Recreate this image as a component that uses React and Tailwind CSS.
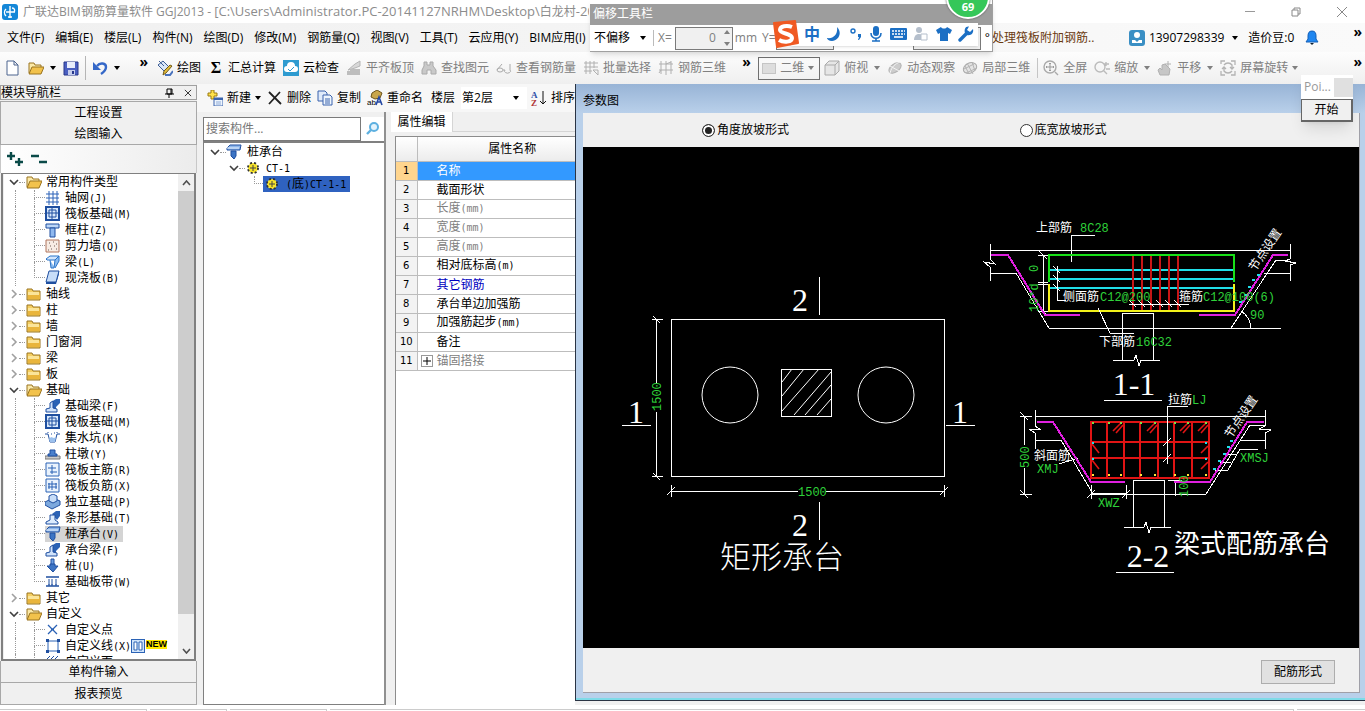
import { useState } from "react";

const ink = "#1f4fa0";

const glyphs = {
  folder: (
    <>
      <path d="M1 3h5l1 2h7v9H1z" fill="#f5cf62" stroke="#9a7420" />
      <path d="M2 7h12v6H2z" fill="#e9b53c" />
      <path d="M2 6h11v3H2z" fill="#fbe59a" />
    </>
  ),
  open: (
    <>
      <path d="M1 3h5l1 2h6v8H1z" fill="#fbe9a8" stroke="#9a7420" />
      <path d="M4 7h12l-3 7H1z" fill="#f2c24c" stroke="#9a7420" />
    </>
  ),
  axis: <path d="M1 4h13M1 8h13M1 12h13M4 1v14M8 1v14M12 1v14" stroke="#2d62b8" fill="none" />,
  raft: (
    <>
      <path d="M1 1h13v13H1z" fill="#d8e8fb" stroke={ink} strokeWidth="2" />
      <path d="M4 4h7v7H4zM7 2v12M2 7h12" fill="none" stroke={ink} />
    </>
  ),
  column: (
    <>
      <path d="M1 2h13v4H1z" fill="#bcd6f7" stroke={ink} />
      <path d="M5 6h5v9H5z" fill="#8fb8ee" stroke={ink} />
    </>
  ),
  wall: (
    <>
      <path d="M1 2h13v12H1z" fill="#f7ece4" stroke="#b0745c" />
      <path d="M4 5h1M8 4h1M5 8h1M9 8h1M11 11h1M6 11h1M11 6h1M3 12h1" stroke="#6d5a52" />
    </>
  ),
  beam: (
    <>
      <path d="M1 5l4-3h9l-3 4H2z" fill="#d3e6fc" stroke="#2b74c9" />
      <path d="M5 6l1 8h3l1-8 4-4v5l-4 7" fill="#8bbcf0" stroke="#2b74c9" />
    </>
  ),
  slab: (
    <>
      <path d="M4 1h10l-3 11H1z" fill="#c7ddf8" stroke={ink} />
      <path d="M1 12h10l3-11v3l-3 10H1z" fill={ink} />
    </>
  ),
  fbeam: (
    <>
      <path d="M6 4l5-3h4v4l-4 4v5H8V6z" fill="#2b62b5" />
      <path d="M1 14v-3l4-1V5l3-2v7l4 1v3z" fill="#cfe2fb" stroke={ink} />
    </>
  ),
  pit: (
    <>
      <path d="M0 4h3l2 8h5l2-8h3" fill="none" stroke={ink} />
      <path d="M4 9l2-2 3 1 2-1-1 5H5z" fill="#9cc1ee" />
      <path d="M3 2v1M6 4h1M9 3h1M12 2v1" stroke={ink} />
    </>
  ),
  pier: (
    <>
      <path d="M0 10h15v3H0z" fill="#c9c9c9" stroke="#777" />
      <path d="M3 10V8h2V4h5v4h2v2z" fill="#4a80cc" stroke={ink} />
    </>
  ),
  rebarA: <path d="M1 1h13v13H1zM7 3v9M3 6h8M5 10h7" fill="#eaf3fd" stroke="#2b62b5" />,
  rebarB: <path d="M1 1h13v13H1zM7 3v9M3 6h9M3 9h9M11 5v6M4 5v6" fill="#eaf3fd" stroke="#2b62b5" />,
  pad: (
    <>
      <path d="M0 8l8-4 7 3v4l-8 4-7-4z" fill="#7ca8dd" stroke={ink} />
      <path d="M4 2l4-2 4 2v5L8 9 4 7z" fill="#c7ddf8" stroke={ink} />
    </>
  ),
  strip: (
    <>
      <path d="M7 4l4-3h4v5l-3 4z" fill="#2b62b5" />
      <path d="M1 14v-2l4-2V5h5v5l3 2v2z" fill="#dcebfd" stroke={ink} />
    </>
  ),
  cap: (
    <>
      <path d="M1 4l3-3h11l-1 5H1z" fill="#8db6ea" stroke={ink} />
      <path d="M1 4h12" stroke="#e8f2fe" />
      <path d="M5 7h5v5l-2 3-3-3z" fill="#3c74c4" stroke={ink} />
    </>
  ),
  pile: (
    <>
      <path d="M6 1h3v6H6z" fill="#6b9de0" stroke={ink} />
      <path d="M2 8h3V6h5v2h3l-5 6z" fill="#3c74c4" stroke={ink} />
    </>
  ),
  band: (
    <>
      <path d="M1 3h13M1 12h13" fill="none" stroke={ink} strokeWidth="1.4" />
      <path d="M4 5v6M7 5v6M11 5v6M3 11h2M6 11h2M10 11h2" fill="none" stroke={ink} />
    </>
  ),
  point: <path d="M3 3l9 9M12 3l-9 9M6 7h3" fill="none" stroke="#2b62b5" strokeWidth="1.3" />,
  line: (
    <>
      <path d="M3 3h10v10H3z" fill="none" stroke="#2b62b5" />
      <path d="M1 1h3v3H1zM12 1h3v3h-3zM1 12h3v3H1zM12 12h3v3h-3z" fill={ink} />
    </>
  ),
  face: <path d="M1 6l4-4M5 6l4-4M9 6l4-4" stroke={ink} />,
  gear: (
    <>
      <circle cx="8" cy="8" r="5" fill="#ffee33" stroke="#333" strokeWidth="2" strokeDasharray="2 2" />
      <circle cx="8" cy="8" r="4" fill="#f7e32a" />
      <path d="M8 5v6M5 8h6" stroke="#444" />
    </>
  ),
  file: <path d="M2 1h7l4 4v10H2zM9 1v4h4" fill="#fff" stroke="#4d648f" />,
  save: (
    <>
      <path d="M1 2h14v13H1z" fill="#4a5fc0" stroke="#27378a" />
      <path d="M4 2h8v6H4z" fill="#e8edfb" />
      <path d="M5 10h7v5H5z" fill="#c5cdec" />
      <path d="M9 11h2v3H9z" fill="#27378a" />
    </>
  ),
  undo: (
    <>
      <path d="M5 6c3-4 9-3 9 1 0 3-2 5-5 7" fill="none" stroke="#3568c8" strokeWidth="2.4" />
      <path d="M1 2v8h8z" fill="#3568c8" />
    </>
  ),
  paint: (
    <>
      <path d="M1 5l5-4 6 6-5 4z" fill="#dbe7f7" stroke="#3b5c94" />
      <path d="M2 1l5 5" stroke="#3b5c94" />
      <path d="M15 6l-6 7-3 2 1-4 6-6z" fill="#e2bb3a" stroke="#715b1b" />
      <path d="M8 15h5l3-4" stroke="#4972bd" strokeWidth="2" fill="none" />
    </>
  ),
  cloud: (
    <>
      <path d="M0 0h16v16H0z" fill="#2e9bd0" />
      <path d="M4 12a3 3 0 010-6 4 4 0 018 0 3 3 0 010 6z" fill="#fff" />
      <path d="M5 9l2 2 4-4" fill="none" stroke="#2e9bd0" />
    </>
  ),
  level: (
    <>
      <path d="M2 10l7-6 5-3v5l-5 2z" fill="#d8d8d8" stroke="#b5b5b5" />
      <path d="M1 15v-4h3v-2h10v6z" fill="#bdbdbd" />
    </>
  ),
  find: <path d="M3 2h3v3h3V2h3v4l3 4v4h-5v-4H6v4H1v-4l2-4z" fill="#c9c9c9" stroke="#aaa" />,
  glasses: <path d="M1 10a3 2 0 106 0 3 2 0 00-6 0zM9 10a3 2 0 105 0V4M1 10l5-6M7 10h2" fill="none" stroke="#aaa" />,
  batch: <path d="M1 3h14M1 7h14M1 11h8M3 1v13M7 1v13M11 1v7M10 10h5v5z" fill="none" stroke="#b0b0b0" />,
  grid3: <path d="M1 4h14M1 10h14M3 1v13M8 1v14M13 1v13M8 4l5-2M3 10l-2 3" fill="none" stroke="#b0b0b0" />,
  cube: <path d="M1 5l4-4h10v10l-4 4H1zM1 5h10v10M11 5l4-4" fill="#e6e6e6" stroke="#aaa" />,
  orbit: (
    <>
      <ellipse cx="8" cy="8" rx="7" ry="4" transform="rotate(-35 8 8)" fill="#ccc" stroke="#b2b2b2" />
      <path d="M3 13c2-7 5-9 10-11M3 6l9 5" stroke="#f4f4f4" fill="none" />
    </>
  ),
  local: (
    <>
      <ellipse cx="8" cy="8" rx="7" ry="5" transform="rotate(-25 8 8)" fill="#e4e4e4" stroke="#aaa" />
      <path d="M5 3l6 11M10 2l3 9M2 9l10-5M4 13l11-5M3 6l4 8" fill="none" stroke="#b5b5b5" />
    </>
  ),
  full: (
    <>
      <path d="M7 1a6 6 0 100 12A6 6 0 007 1zM12 12l3 3" fill="none" stroke="#aaa" strokeWidth="1.4" />
      <path d="M7 3v8M3 7h8M6 4l1-1 1 1M6 10l1 1 1-1M4 6L3 7l1 1M10 6l1 1-1 1" fill="none" stroke="#999" />
    </>
  ),
  zoom: <path d="M6 2a5 5 0 100 10A5 5 0 006 2zM9 10l4 4M12 2v4M10 4h5M12 9h4" fill="none" stroke="#bbb" strokeWidth="1.4" />,
  pan: (
    <>
      <path d="M3 15l-2-5 2-2 2 2V5l3-1 5 5-1 6z" fill="#c6c6c6" stroke="#b0b0b0" />
      <path d="M11 1v6M8 4h6" stroke="#b0b0b0" />
    </>
  ),
  rotate: <path d="M1 4V1h4M11 1h4v4M15 11v4h-4M5 15H1v-4M4 5a5 5 0 018 0v3M12 11a5 5 0 01-8 0V8M10 7l2 2 2-2M2 9l2-2 2 2" fill="none" stroke="#b3b3b3" strokeWidth="1.3" />,
  add: (
    <>
      <path d="M4 0h3v3h3v3H7v3H4V6H1V3h3z" fill="#ffe14a" stroke="#9a7a10" />
      <path d="M7 8h9v8H7z" fill="#eef5fd" stroke="#3a63ad" />
      <path d="M7 9h9" stroke="#3a63ad" strokeWidth="2" />
      <path d="M9 12h5M9 14h5" stroke="#8fabd8" />
    </>
  ),
  del: <path d="M2 2l12 12M13 2L2 14" stroke="#222" strokeWidth="1.8" fill="none" />,
  copy: (
    <>
      <path d="M1 1h7l2 2v8H1z" fill="#dfeafa" stroke="#3a63ad" />
      <path d="M6 5h7l2 2v8H6zM8 9h5M8 11h5M8 13h5" fill="#eef5fd" stroke="#3a63ad" />
    </>
  ),
  rename: (
    <>
      <path d="M5 3l5-3 5 3-2 5-5 1-4-2z" fill="#c9a64b" stroke="#6b521a" />
      <text x="0" y="15" fontSize="8" fontFamily="Liberation Sans">ab</text>
      <path d="M9 15l3-8 3 8M10 12h4" stroke="#2447a3" strokeWidth="1.6" fill="none" />
    </>
  ),
  sort: (
    <>
      <text x="0" y="8" fontSize="9" fontWeight="bold" fill="#2c4fa8" fontFamily="Liberation Serif">A</text>
      <text x="0" y="16" fontSize="9" fontWeight="bold" fill="#b03535" fontFamily="Liberation Serif">Z</text>
      <path d="M12 1v13M9 11l3 3 3-3" stroke="#111" fill="none" />
    </>
  ),
};

function Icon({ name, className = "" }) {
  return (
    <svg viewBox="0 0 16 16" className={`w-4 h-4 shrink-0 ${className}`} aria-hidden="true">
      {glyphs[name]}
    </svg>
  );
}

function Caret({ className = "" }) {
  return (
    <svg viewBox="0 0 6 4" className={`w-[6px] h-1 shrink-0 ${className}`} aria-hidden="true">
      <path d="M0 0h6L3 4z" fill="currentColor" />
    </svg>
  );
}

function Chevron({ open }) {
  return (
    <svg viewBox="0 0 10 10" className="w-[10px] h-[10px] shrink-0" aria-hidden="true">
      <path d={open ? "M1 3l4 4 4-4" : "M3 1l4 4-4 4"} fill="none" stroke={open ? "#404040" : "#a0a0a0"} strokeWidth="1.6" />
    </svg>
  );
}

const menus = ["文件(F)", "编辑(E)", "楼层(L)", "构件(N)", "绘图(D)", "修改(M)", "钢筋量(Q)", "视图(V)", "工具(T)", "云应用(Y)", "BIM应用(I)"];

const tools = [
  { icon: "paint", label: "绘图" },
  { icon: "sum", label: "汇总计算" },
  { icon: "cloud", label: "云检查" },
  { icon: "level", label: "平齐板顶", off: true },
  { icon: "find", label: "查找图元", off: true },
  { icon: "glasses", label: "查看钢筋量", off: true },
  { icon: "batch", label: "批量选择", off: true },
  { icon: "grid3", label: "钢筋三维", off: true },
];

const tree = [
  { label: "常用构件类型", open: true },
  { label: "轴网", key: "(J)", icon: "axis" },
  { label: "筏板基础", key: "(M)", icon: "raft" },
  { label: "框柱", key: "(Z)", icon: "column" },
  { label: "剪力墙", key: "(Q)", icon: "wall" },
  { label: "梁", key: "(L)", icon: "beam" },
  { label: "现浇板", key: "(B)", icon: "slab", last: true },
  { label: "轴线" },
  { label: "柱" },
  { label: "墙" },
  { label: "门窗洞" },
  { label: "梁" },
  { label: "板" },
  { label: "基础", open: true },
  { label: "基础梁", key: "(F)", icon: "fbeam" },
  { label: "筏板基础", key: "(M)", icon: "raft" },
  { label: "集水坑", key: "(K)", icon: "pit" },
  { label: "柱墩", key: "(Y)", icon: "pier" },
  { label: "筏板主筋", key: "(R)", icon: "rebarA" },
  { label: "筏板负筋", key: "(X)", icon: "rebarB" },
  { label: "独立基础", key: "(P)", icon: "pad" },
  { label: "条形基础", key: "(T)", icon: "strip" },
  { label: "桩承台", key: "(V)", icon: "cap", active: true },
  { label: "承台梁", key: "(F)", icon: "fbeam" },
  { label: "桩", key: "(U)", icon: "pile" },
  { label: "基础板带", key: "(W)", icon: "band", last: true },
  { label: "其它" },
  { label: "自定义", open: true },
  { label: "自定义点", icon: "point" },
  { label: "自定义线", key: "(X)", icon: "line", isNew: true },
  { label: "自定义面", icon: "face" },
];

const props = [
  { name: "名称" },
  { name: "截面形状" },
  { name: "长度", unit: "(mm)", tone: "text-[#808080]" },
  { name: "宽度", unit: "(mm)", tone: "text-[#808080]" },
  { name: "高度", unit: "(mm)", tone: "text-[#808080]" },
  { name: "相对底标高", unit: "(m)" },
  { name: "其它钢筋", tone: "text-[#0000c0]" },
  { name: "承台单边加强筋" },
  { name: "加强筋起步", unit: "(mm)" },
  { name: "备注" },
  { name: "锚固搭接", tone: "text-[#808080]", more: true },
];

function Mono({ children }) {
  return <span className="font-['DejaVu_Sans_Mono',monospace] text-[10px]">{children}</span>;
}

function ToolButton({ icon, label, off, caret, tight }) {
  return (
    <button className={`flex items-center gap-1 shrink-0 ${off ? "text-[#808080]" : "text-black"}`}>
      {icon === "sum" ? <span className="w-4 text-center text-base font-bold leading-4 font-['Liberation_Serif',serif]">Σ</span> : <Icon name={icon} />}
      <span>{label}</span>
      {caret && <Caret className={tight ? "" : "ml-[2px]"} />}
    </button>
  );
}

function TitleBar() {
  return (
    <header className="flex items-center h-[23px] shrink-0 bg-white text-[#8c8c8c] pl-[2px]">
      <svg viewBox="0 0 16 16" className="w-4 h-4 shrink-0" aria-hidden="true">
        <rect width="16" height="16" rx="3" fill="#1487d8" />
        <path d="M8 2v12M4 8h9M4 5c-2 2-2 5 0 7M10 4c3 0 3 3 2 4M6 13h4" fill="none" stroke="#fff" strokeWidth="1.4" />
      </svg>
      <h1 className="ml-[5px] w-[566px] overflow-hidden whitespace-nowrap">
        广联达BIM钢筋算量软件 GGJ2013 - <span className="text-[13px]">[C:\Users\Administrator.PC-20141127NRHM\Desktop\</span>白龙村<span className="text-[13px]">-20</span>
      </h1>
      <div className="flex items-center gap-9 ml-auto mr-[18px]">
        <button aria-label="最小化" className="w-[10px] h-px bg-[#999]" />
        <button aria-label="还原">
          <svg viewBox="0 0 10 10" className="w-[10px] h-[10px]"><path d="M1 3h6v6H1zM3 3V1h6v6H7" fill="none" stroke="#888" /></svg>
        </button>
        <button aria-label="关闭">
          <svg viewBox="0 0 10 10" className="w-[10px] h-[10px]"><path d="M0 0l10 10M10 0L0 10" fill="none" stroke="#888" /></svg>
        </button>
      </div>
    </header>
  );
}

function MenuBar() {
  return (
    <nav className="flex items-center h-[29px] shrink-0 pl-[7px] bg-linear-to-r from-[#f0f0f0] to-[#fafafa]">
      <div className="flex gap-[11px] w-[585px] overflow-hidden whitespace-nowrap">
        {menus.map((m) => (
          <button key={m} className="shrink-0">{m}</button>
        ))}
      </div>
      <a href="#tip" className="ml-[400px] text-[#6b3a10] whitespace-nowrap">处理筏板附加钢筋..</a>
      <div className="flex items-center gap-[6px] ml-auto mr-[3px] whitespace-nowrap">
        <svg viewBox="0 0 16 16" className="w-4 h-4" aria-hidden="true">
          <rect width="16" height="16" rx="3" fill="#3a8fc4" />
          <circle cx="8" cy="5" r="3" fill="#fff" />
          <path d="M3 10h3l2 2 2-2h3v3H3z" fill="#fff" />
        </svg>
        <button className="flex items-center gap-2 -ml-[2px]">13907298339 <Caret /></button>
        <span className="ml-1">造价豆:0</span>
        <svg viewBox="0 0 14 16" className="w-[14px] h-4 ml-[5px]" aria-label="消息">
          <path d="M7 1c3 0 4 2 4 5v3l2 3H1l2-3V6c0-3 1-5 4-5z" fill="#1f86f0" stroke="#1560b8" />
          <path d="M5 13l2 2 2-2z" fill="#123" />
        </svg>
        <button className="ml-7 mb-3 text-sm font-bold leading-3">»</button>
      </div>
    </nav>
  );
}

function MainToolbar() {
  return (
    <div className="flex items-center h-8 shrink-0 pl-[5px] whitespace-nowrap bg-linear-to-b from-[#fdfdfd] to-[#efefef]">
      <div className="flex items-center w-[152px] shrink-0">
        <button aria-label="新建"><Icon name="file" /></button>
        <button aria-label="打开" className="flex items-center gap-[6px] ml-[7px]"><Icon name="open" /><Caret /></button>
        <button aria-label="保存" className="ml-[7px]"><Icon name="save" /></button>
        <span className="w-px h-6 ml-[6px] bg-[#b5b5b5]" />
        <button aria-label="撤销" className="flex items-center gap-[6px] ml-[6px]"><Icon name="undo" /><Caret /></button>
        <button className="ml-auto mr-[9px] mb-3 text-sm font-bold leading-3">»</button>
      </div>
      <div className="flex items-center gap-[7px]">
        {tools.map((t) => (
          <ToolButton key={t.label} {...t} />
        ))}
      </div>
      <button className="ml-4 mb-3 w-[9px] text-sm font-bold leading-3">»</button>
      <button className="flex items-center gap-1 w-[62px] h-[23px] px-[3px] ml-[7px] shrink-0 border border-[#707070] text-[#808080]">
        <span className="w-[14px] h-[11px] bg-[#ddd] border border-[#c5c5c5]" />
        <span>二维</span>
        <Caret />
      </button>
      <div className="flex items-center gap-[7px] ml-1">
        <ToolButton icon="cube" label="俯视" off caret />
        <ToolButton icon="orbit" label="动态观察" off />
        <ToolButton icon="local" label="局部三维" off />
        <span className="w-px h-5 bg-[#c5c5c5] -mr-[2px]" />
        <ToolButton icon="full" label="全屏" off />
        <ToolButton icon="zoom" label="缩放" off caret />
        <ToolButton icon="pan" label="平移" off caret />
        <ToolButton icon="rotate" label="屏幕旋转" off caret tight />
      </div>
      <button className="ml-auto mr-[3px] mb-3 text-sm font-bold leading-3">»</button>
    </div>
  );
}

function TreeRow({ item }) {
  if (!item.icon) {
    return (
      <li className="flex items-center h-4 pl-[3px]">
        <Chevron open={item.open} />
        <span className="w-[6px] border-t border-dotted border-[#999]" />
        <Icon name={item.open ? "open" : "folder"} className="mx-[1px]" />
        <span className="ml-[3px]">{item.label}</span>
      </li>
    );
  }
  return (
    <li className="flex items-center h-4 pl-[9px]">
      <span className="w-[19px] h-4 shrink-0 border-l border-dotted border-[#999]" />
      <span className="flex flex-col w-[11px] h-4 shrink-0">
        <span className="h-2 border-l border-b border-dotted border-[#999]" />
        {!item.last && <span className="h-2 border-l border-dotted border-[#999]" />}
      </span>
      <span className={`flex items-center h-4 pr-1 ${item.active ? "bg-[#d4d4d4]" : ""}`}>
        <Icon name={item.icon} />
        <span className="ml-1">{item.label}{item.key && <Mono>{item.key}</Mono>}</span>
      </span>
      {item.isNew && (
        <>
          <svg viewBox="0 0 14 14" className="w-[14px] h-[14px] -ml-1 shrink-0" aria-hidden="true">
            <path d="M0 0h14v14H0z" fill="#cfe3fa" stroke="#2b62b5" strokeWidth="2" />
            <path d="M3 3h3v8H3zM8 3h3v8H8z" fill="#fff" stroke="#2b62b5" />
          </svg>
          <span className="ml-[1px] mb-1 h-[9px] bg-[#ffea00] text-[9px] leading-[9px] font-bold font-['Liberation_Sans',sans-serif]">NEW</span>
        </>
      )}
    </li>
  );
}

function NavButton({ children }) {
  return <button className="h-[22px] shrink-0 border border-t-0 border-[#a8a8a8] bg-[#f0f0f0] text-center">{children}</button>;
}

function ModulePanel() {
  return (
    <aside className="flex flex-col w-[197px] shrink-0 pt-px">
      <div className="flex items-center h-[15px] shrink-0 border border-[#a0a0a0] pr-1">
        <h2>模块导航栏</h2>
        <button aria-label="固定" className="ml-auto">
          <svg viewBox="0 0 9 10" className="w-[9px] h-[10px]"><path d="M2 1h5v5H2zM0 6h9M4 6v4M6 1v5" fill="none" stroke="#000" /></svg>
        </button>
        <button aria-label="关闭" className="ml-[10px]">
          <svg viewBox="0 0 9 9" className="w-2 h-2"><path d="M1 1l7 7M8 1L1 8" stroke="#222" /></svg>
        </button>
      </div>
      <div className="h-[22px] shrink-0 mt-px flex flex-col border-t border-[#a8a8a8]"><NavButton>工程设置</NavButton></div>
      <NavButton>绘图输入</NavButton>
      <div className="flex items-center gap-2 h-7 shrink-0 pl-[6px] border-x border-[#c8c8c8] bg-linear-to-r from-white to-[#ececec]">
        <button aria-label="展开">
          <svg viewBox="0 0 16 16" className="w-4 h-4"><path d="M4 1v8M0 5h8M12 7v8M8 11h8" stroke="#0a4a48" strokeWidth="2.4" /></svg>
        </button>
        <button aria-label="折叠">
          <svg viewBox="0 0 16 16" className="w-4 h-4"><path d="M0 5h8M8 11h8" stroke="#0a4a48" strokeWidth="2.4" /></svg>
        </button>
      </div>
      <div className="flex flex-1 min-h-0 mx-[1px] border-2 border-t border-[#808080] bg-white">
        <ul className="flex-1 min-w-0 pl-[2px] overflow-hidden whitespace-nowrap border-l border-[#eee]">
          {tree.map((item, i) => (
            <TreeRow key={i} item={item} />
          ))}
        </ul>
        <div className="flex flex-col w-4 shrink-0 bg-[#f0f0f0]">
          <button aria-label="向上滚动" className="h-[17px] flex items-center justify-center">
            <svg viewBox="0 0 9 6" className="w-[9px] h-[6px]"><path d="M1 5l3.500-4L8 5" fill="none" stroke="#505050" strokeWidth="1.6" /></svg>
          </button>
          <div className="flex-1 bg-[#cdcdcd]" />
          <div className="h-7" />
          <button aria-label="向下滚动" className="h-[17px] flex items-center justify-center">
            <svg viewBox="0 0 9 6" className="w-[9px] h-[6px]"><path d="M1 1l3.500 4L8 1" fill="none" stroke="#505050" strokeWidth="1.6" /></svg>
          </button>
        </div>
      </div>
      <NavButton>单构件输入</NavButton>
      <NavButton>报表预览</NavButton>
    </aside>
  );
}

function ComponentPanel() {
  return (
    <section className="flex flex-col w-[378px] shrink-0 overflow-hidden whitespace-nowrap">
      <div className="flex items-center h-7 shrink-0 pl-[10px] gap-[6px] bg-[#f7f7f7]">
        <ToolButton icon="add" label="新建" caret tight />
        <ToolButton icon="del" label="删除" />
        <ToolButton icon="copy" label="复制" />
        <ToolButton icon="rename" label="重命名" />
        <span className="w-px h-4 bg-[#d3b9b0]" />
        <label htmlFor="floor" className="-ml-[4px]">楼层</label>
        <div className="flex items-center shrink-0 w-[66px] h-[22px] pr-2 bg-white">
          <select id="floor" className="appearance-none flex-1 min-w-0 pl-[1px] bg-white outline-none">
            <option>第2层</option>
          </select>
          <Caret />
        </div>
        <span className="w-px h-4 -ml-[6px] bg-[#d3b9b0]" />
        <div className="-ml-[2px]"><ToolButton icon="sort" label="排序" /></div>
      </div>
      <div className="flex flex-1 min-h-0">
        <div className="flex flex-col w-[183px] ml-[6px] shrink-0 pt-1 border-r-2 border-[#909090]">
          <div className="flex items-center h-[25px] shrink-0">
            <input aria-label="搜索构件" placeholder="搜索构件..." className="w-[158px] h-6 border border-[#7a7a7a] bg-white px-[2px] outline-none placeholder:text-[#777]" />
            <button aria-label="搜索" className="flex flex-1 justify-center items-center h-6 bg-white">
              <svg viewBox="0 0 14 14" className="w-[14px] h-[14px]"><circle cx="8" cy="5" r="4" fill="#e4f3fc" stroke="#5db0e0" strokeWidth="2" /><path d="M5 8l-4 4" stroke="#5db0e0" strokeWidth="2.4" /></svg>
            </button>
          </div>
          <ul className="flex-1 border border-r-0 border-t-2 border-[#808080] bg-white pt-px">
            <li className="flex items-center h-4 pl-[6px]">
              <Chevron open />
              <span className="w-[6px] border-t border-dotted border-[#999]" />
              <Icon name="cap" />
              <span className="ml-[5px]">桩承台</span>
            </li>
            <li className="flex items-center h-4 pl-[25px]">
              <Chevron open />
              <span className="w-[6px] border-t border-dotted border-[#999]" />
              <Icon name="gear" />
              <span className="ml-[5px]"><Mono>CT-1</Mono></span>
            </li>
            <li className="flex items-center h-4 pl-[50px]">
              <span className="w-[9px] h-2 mb-2 border-l border-b border-dotted border-[#999]" />
              <span className="flex items-center h-4 pl-[1px] pr-1 bg-[#2f62c0]">
                <Icon name="gear" />
                <span className="ml-[6px]"><Mono>(</Mono>底<Mono>)CT-1-1</Mono></span>
              </span>
            </li>
          </ul>
        </div>
        <div className="flex flex-col flex-1 min-w-0 ml-[5px]">
          <div className="flex h-5 shrink-0">
            <button className="w-[62px] bg-white border-r border-[#d5d5d5]">属性编辑</button>
            <span className="flex-1 border-b border-[#d5d5d5]" />
          </div>
          <div className="flex-1 mt-1 ml-1 border-l border-t border-[#8c8c8c] bg-white">
            <table className="w-full border-collapse table-fixed">
              <thead>
                <tr className="h-6 bg-linear-to-b from-white to-[#ececec]">
                  <th className="w-[21px] border-r border-b border-[#bdbdbd]" />
                  <th className="pl-8 font-normal border-b border-[#bdbdbd]">属性名称</th>
                </tr>
              </thead>
              <tbody>
                {props.map((p, i) => (
                  <tr key={p.name} className="h-[19px]">
                    <td className={`border-r border-b border-[#bdbdbd] p-0 text-center ${i === 0 ? "bg-[#ffd58e]" : "bg-[#f3f3f3]"}`}>
                      <span className="font-['DejaVu_Sans',sans-serif] text-[10px]">{i + 1}</span>
                    </td>
                    <td className={`border-b border-[#bdbdbd] p-0 ${i === 0 ? "bg-[#3399ff] text-white" : p.tone || ""}`}>
                      <div className="flex items-center">
                        <span className="flex justify-center w-[19px] shrink-0">
                          {p.more && (
                            <button aria-label="展开" className="w-3 h-3 border border-[#999] text-black">
                              <svg viewBox="0 0 10 10" className="w-[10px] h-[10px]"><path d="M5 1v8M1 5h8" stroke="#000" /></svg>
                            </button>
                          )}
                        </span>
                        <span>{p.name}{p.unit && <Mono>{p.unit}</Mono>}</span>
                      </div>
                    </td>
                  </tr>
                ))}
              </tbody>
            </table>
          </div>
        </div>
      </div>
    </section>
  );
}

const green = "#2fd23a";
const magenta = "#e01fe0";
const red = "#e01414";
const cyan = "#20dfe8";

// one drawing unit is one pixel of the dialog canvas
function Drawing() {
  const stirrups = [1133, 1142, 1151, 1160, 1169, 1178];
  const bars = [1093, 1109, 1121, 1141, 1155, 1175, 1188, 1206];
  return (
    <svg viewBox="583 147 776 501" className="w-full h-full" role="img" aria-label="参数图">
      <g fill="none" stroke="#fff" shapeRendering="crispEdges">
        <path d="M671 319H944V476H671zM781 369H831V416H781z" />
        <path d="M819 277V315M819 502V540M622 425H651M946 425H975" />
        <path d="M656 319V383M656 412V476M652 319H663M652 476H663M653 316L660 323M653 473L660 480" />
        <path d="M671 491H798M826 491H944M671 485V497M944 485V497M667 495L675 487M940 495L948 487" />
        <path d="M1104 400H1162M1116 572H1174" />

        <path d="M1071 262V235H1095M990 250H1290" />
        <path d="M990 244V259L995 264L984 262L990 267V281M1290 244V259L1285 261L1296 263L1290 265V281" />
        <path d="M990 273H1016L1049 328H1281M1231 328L1276 260H1285M1264 273H1290" />
        <path d="M1043 255V311M1038 255H1048M1038 282H1048M1038 284H1048M1038 311H1048M1039 251L1047 259M1039 307L1047 315" />
        <path d="M1122 360V313H1153V360M1113 360H1134L1136 355L1139 366L1141 360H1160" />
        <path d="M1241 311A22 22 0 0 1 1251 328" />

        <path d="M1035 416H1265M1035 410V426L1041 430L1029 429L1035 433V449M1265 410V426L1259 429L1271 430L1265 433V449" />
        <path d="M1024 416V445M1024 468V494M1020 416H1032M1020 494H1032M1020 412L1028 420M1020 490L1028 498" />
        <path d="M1035 440H1061L1093 494H1206L1250 425H1265M1241 440H1265" />
        <path d="M1225 454H1237M1220 462H1231M1215 470H1228L1240 449H1258" />
        <path d="M1059 464L1078 458M1091 485V499M1126 485V499M1087 498L1095 490M1122 498L1130 490" />
        <path d="M1175 480V496M1168 480H1182" />
        <path d="M1133 527V480H1164V527M1124 527H1144L1146 522L1149 533L1151 527H1171" />
      </g>
      <path d="M1091 494H1126" stroke="#fff" strokeWidth="2" shapeRendering="crispEdges" />
      <g fill="none" stroke="#fff">
        <circle cx="730" cy="395" r="28" />
        <circle cx="886" cy="395" r="28" />
        <path d="M782 382L792 369M782 396L804 369M782 411L819 369M794 415L831 372M805 415L831 385M817 415L831 399" />
      </g>

      <g fill="none" strokeWidth="2" shapeRendering="crispEdges">
        <path d="M991 255H1008L1045 315H1080M1199 315H1235L1273 255H1288" stroke={magenta} />
        <path d="M1037 422H1053L1091 482H1125M1174 482H1210L1247 422H1264" stroke={magenta} />
        <path d="M1049 270H1234M1049 279H1234M1049 288H1234" stroke={cyan} />
        {stirrups.map((x) => (
          <path key={x} d={`M${x} 256V311`} stroke="#c81616" />
        ))}
        <path d="M1049 282V255H1234V282" stroke="#18e018" />
        <path d="M1049 284V311H1234V284" stroke="#f2f21a" />
        <path d="M1091 422H1209V478H1091zM1107 422V478M1124 422V478M1140 422V478M1158 422V478M1174 422V478M1192 422V478M1091 442H1209M1091 458H1209" stroke={red} />
      </g>
      <g fill="none" stroke={red} strokeWidth="1.6">
        {[1113, 1147, 1180, 1198].map((x) => (
          <path key={x} d={`M${x} 431L${x + 8} 423M${x + 3} 433L${x + 10} 425`} />
        ))}
        <path d="M1092 444L1099 453M1092 460L1099 469M1201 453L1208 446M1201 469L1208 462" />
      </g>
      {bars.map((x) => (
        <g key={x}>
          <rect x={x - 1} y="422" width="2" height="2" fill="#7be04a" />
          <rect x={x - 1} y="474" width="2" height="2" fill="#ffe23a" />
        </g>
      ))}
      <path d="M1092 443h2M1092 459h2M1205 443h2M1205 459h2M1257 275h3M1252 280h3M1248 287h3M1244 295h3M1239 302h3M1230 441h3M1227 447h3M1223 454h3M1218 461h3M1213 469h3" stroke={cyan} strokeWidth="2" />

      <g fill="none" stroke="#fff" shapeRendering="crispEdges">
        <path d="M1057 266V300H1066M1053 266L1060 273M1053 275L1060 282M1053 284L1060 291" />
        <path d="M1129 304H1189M1098 308L1110 333H1134" />
        {stirrups.map((x) => (
          <path key={x} d={`M${x - 4} 300L${x + 3} 307`} />
        ))}
        <path d="M1167 464V406H1188M1163 446L1171 438M1163 462L1171 454" />
      </g>

      <g fill="#fff" className="font-['Noto_Sans_CJK_SC',sans-serif]" fontSize="12">
        <text x="1036" y="232">上部筋</text>
        <text x="1063" y="301">侧面筋</text>
        <text x="1179" y="301">箍筋</text>
        <text x="1099" y="346">下部筋</text>
        <text x="1168" y="404">拉筋</text>
        <text x="1034" y="460">斜面筋</text>
        <text transform="translate(1255 272) rotate(-56)">节点设置</text>
        <text transform="translate(1231 439) rotate(-56)">节点设置</text>
        <text x="720" y="568" fontSize="31" fontWeight="300">矩形承台</text>
        <text x="1174" y="553" fontSize="26">梁式配筋承台</text>
      </g>
      <g fill={green} className="font-['Liberation_Mono',monospace]" fontSize="12">
        <text x="1080" y="232">8C28</text>
        <text x="1100" y="301">C12@200</text>
        <text x="1203" y="301">C12@100(6)</text>
        <text x="1250" y="319">90</text>
        <text x="1136" y="346">16C32</text>
        <text x="1192" y="404">LJ</text>
        <text x="1037" y="473">XMJ</text>
        <text x="1098" y="507">XWZ</text>
        <text x="1240" y="462">XMSJ</text>
        <text x="798" y="496">1500</text>
        <text transform="translate(661 411) rotate(-90)">1500</text>
        <text transform="translate(1038 272) rotate(-90)">0</text>
        <text transform="translate(1038 312) rotate(-90)">10*d</text>
        <text transform="translate(1029 468) rotate(-90)">500</text>
        <text transform="translate(1188 497) rotate(-90)">100</text>
      </g>
      <g fill="#fff" className="font-['Liberation_Serif',serif]" fontSize="32">
        <text x="792" y="311">2</text>
        <text x="792" y="536">2</text>
        <text x="628" y="423">1</text>
        <text x="952" y="423">1</text>
        <text x="1134" y="395" textAnchor="middle">1-1</text>
        <text x="1148" y="567" textAnchor="middle">2-2</text>
      </g>
    </svg>
  );
}

function ParamDialog() {
  const [slope, setSlope] = useState("angle");
  const dot = "appearance-none w-[13px] h-[13px] rounded-full border border-[#333] bg-white checked:bg-[#222] checked:shadow-[inset_0_0_0_2px_#fff]";
  return (
    <section className="flex flex-col flex-1 min-w-0 mb-1 border-l border-b border-[#2a3444] bg-[#b9d0ea]">
      <h2 className="flex items-center h-[29px] shrink-0 pl-[7px] pt-1 bg-linear-to-b from-[#98b4d6] to-[#b9d0ea]">参数图</h2>
      <div className="flex flex-col flex-1 min-h-0 ml-[7px] mr-[5px] bg-[#f0f0f0] border-r border-b border-[#a0a0a8]">
        <div className="grid grid-cols-[318fr_340fr] h-[34px] shrink-0 items-center pl-[119px]">
          <label className="flex items-center gap-[2px]">
            <input type="radio" name="slope" className={dot} checked={slope === "angle"} onChange={() => setSlope("angle")} />
            角度放坡形式
          </label>
          <label className="flex items-center gap-[2px]">
            <input type="radio" name="slope" className={dot} checked={slope === "width"} onChange={() => setSlope("width")} />
            底宽放坡形式
          </label>
        </div>
        <div className="flex-1 min-h-0 bg-black">
          <Drawing />
        </div>
        <div className="flex items-center justify-end h-11 shrink-0 pr-6 pt-1">
          <button className="w-[74px] h-6 border border-[#adadad] bg-[#e1e1e1]">配筋形式</button>
        </div>
      </div>
      <div className="h-[7px] shrink-0 border-b-2 border-[#7fdbe8]" />
    </section>
  );
}

function OffsetWindow() {
  return (
    <div className="absolute left-[590px] top-0 w-[403px] h-[52px] pt-1 bg-white border-r border-b border-[#a0a0a0] shadow-md text-[#808080] whitespace-nowrap">
      <div className="h-[21px] px-[3px] bg-[#9d9d9d] text-white leading-[20px]">偏移工具栏</div>
      <div className="flex items-center h-[26px] pl-1">
        <label className="sr-only" htmlFor="offset">偏移</label>
        <select id="offset" className="appearance-none w-[46px] text-black outline-none">
          <option>不偏移</option>
        </select>
        <Caret className="text-black" />
        <span className="w-px h-4 ml-[7px] mr-1 bg-[#bbb]" />
        <label htmlFor="dx">X=</label>
        <span className="flex items-center w-[58px] h-[23px] ml-[3px] border border-[#7a7a7a] bg-[#f0f0f0]">
          <input id="dx" defaultValue="0" className="w-[40px] text-right bg-transparent outline-none" />
          <span className="flex flex-col gap-2 ml-2">
            <Caret className="rotate-180" />
            <Caret />
          </span>
        </span>
        <span className="ml-[2px]">mm</span>
        <label htmlFor="dy" className="ml-[5px]">Y=</label>
        <input id="dy" className="w-[58px] h-[23px] border border-[#7a7a7a] bg-[#f0f0f0]" />
        <input aria-label="角度" className="w-[68px] h-[23px] ml-auto border border-[#7a7a7a] bg-[#f0f0f0]" />
        <span className="ml-1 mr-[2px] text-black">°</span>
      </div>
    </div>
  );
}

function ImeBar() {
  return (
    <div className="absolute left-[771px] top-[20px] flex items-center h-[28px]">
      <svg viewBox="0 0 28 28" className="w-7 h-7 z-10" aria-hidden="true">
        <path d="M3 3L24 1L27 23L6 27z" fill="#f05a23" stroke="#f05a23" strokeWidth="2" strokeLinejoin="round" />
        <path d="M21 7C16 5 9 6 9 10c0 4 12 3 12 8 0 4-8 5-13 2" fill="none" stroke="#fff" strokeWidth="4" />
      </svg>
      <div className="flex items-center justify-between w-[187px] h-[23px] -ml-2 pl-[13px] pr-1 bg-white text-[#1b6fc4] shadow">
        <span className="text-base font-bold leading-4">中</span>
        <svg viewBox="0 0 16 16" className="w-4 h-4"><path d="M11 1c6 6 1 14-5 14-3 0-5-2-5-3 7 1 11-4 10-11z" fill="currentColor" /></svg>
        <svg viewBox="0 0 14 16" className="w-[14px] h-4"><circle cx="4" cy="5" r="2" fill="none" stroke="currentColor" strokeWidth="1.4" /><path d="M9 8h3v3l-2 3H9l1-3H9z" fill="currentColor" /></svg>
        <svg viewBox="0 0 14 16" className="w-[14px] h-4"><rect x="4" y="0" width="6" height="10" rx="3" fill="currentColor" /><path d="M2 7c0 7 10 7 10 0M7 12v3M3 15h8" fill="none" stroke="currentColor" strokeWidth="1.6" /></svg>
        <svg viewBox="0 0 17 14" className="w-[17px] h-[14px]"><rect y="1" width="17" height="12" rx="1" fill="currentColor" /><path d="M2 4h13M2 7h13" stroke="#fff" strokeWidth="1.6" strokeDasharray="2 1" /><path d="M4 10h9" stroke="#fff" strokeWidth="1.6" /></svg>
        <svg viewBox="0 0 16 16" className="w-4 h-4"><circle cx="6" cy="4" r="3" fill="#b5bfcc" /><path d="M1 14c0-7 7-7 9-4v4z" fill="#b5bfcc" /><path d="M8 8h6v6H8z" fill="#fff" stroke="#b5bfcc" /></svg>
        <svg viewBox="0 0 16 14" className="w-4 h-[14px]"><path d="M5 0c1 2 5 2 6 0l5 3-2 4-2-1v8H4V6L2 7 0 3z" fill="currentColor" /></svg>
        <svg viewBox="0 0 16 16" className="w-4 h-4"><path d="M2 14l7-7" stroke="currentColor" strokeWidth="3.4" strokeLinecap="round" /><path d="M15 3l-3 3-3-2 2-3.500C7 0 6 4 7 7l2 2c4 1 7-2 6-6z" fill="currentColor" /></svg>
      </div>
    </div>
  );
}

export default function App() {
  return (
    <div className="relative flex flex-col h-screen overflow-hidden bg-[#f0f0f0] text-xs leading-4 text-black font-['Open_Sans','Noto_Sans_CJK_SC',sans-serif]">
      <TitleBar />
      <MenuBar />
      <MainToolbar />
      <main className="flex flex-1 min-h-0">
        <ModulePanel />
        <ComponentPanel />
        <ParamDialog />
      </main>
      <footer className="flex gap-[3px] h-[6px] shrink-0 pt-1 bg-white">
        <span className="w-[147px] border-t border-r border-[#ccc]" />
        <span className="w-[77px] border-t border-r border-[#ccc]" />
        <span className="w-[97px] border-t border-r border-[#ccc]" />
        <span className="flex-1 border-t border-r border-[#ccc]" />
        <span className="w-[68px] border-t border-[#ccc]" />
      </footer>

      <OffsetWindow />
      <ImeBar />
      <div className="absolute left-[946px] -top-[25px] w-11 h-11 pt-[23px] rounded-full border-2 border-white bg-[#35c759] text-center text-[11px] leading-[14px] font-bold text-white shadow-[0_0_2px_#444]">69</div>
      <div className="absolute right-3 top-[75px] flex flex-col w-[52px] shadow-lg">
        <div className="flex items-center justify-between h-6 pl-[3px] bg-white text-[#999]">
          <span>Poi...</span>
          <button aria-label="关闭" className="w-[19px] h-[19px] bg-[#e0e0e0]" />
        </div>
        <button className="h-[23px] border-2 border-t border-l border-[#666] bg-[#f0f0f0]">开始</button>
      </div>
    </div>
  );
}
